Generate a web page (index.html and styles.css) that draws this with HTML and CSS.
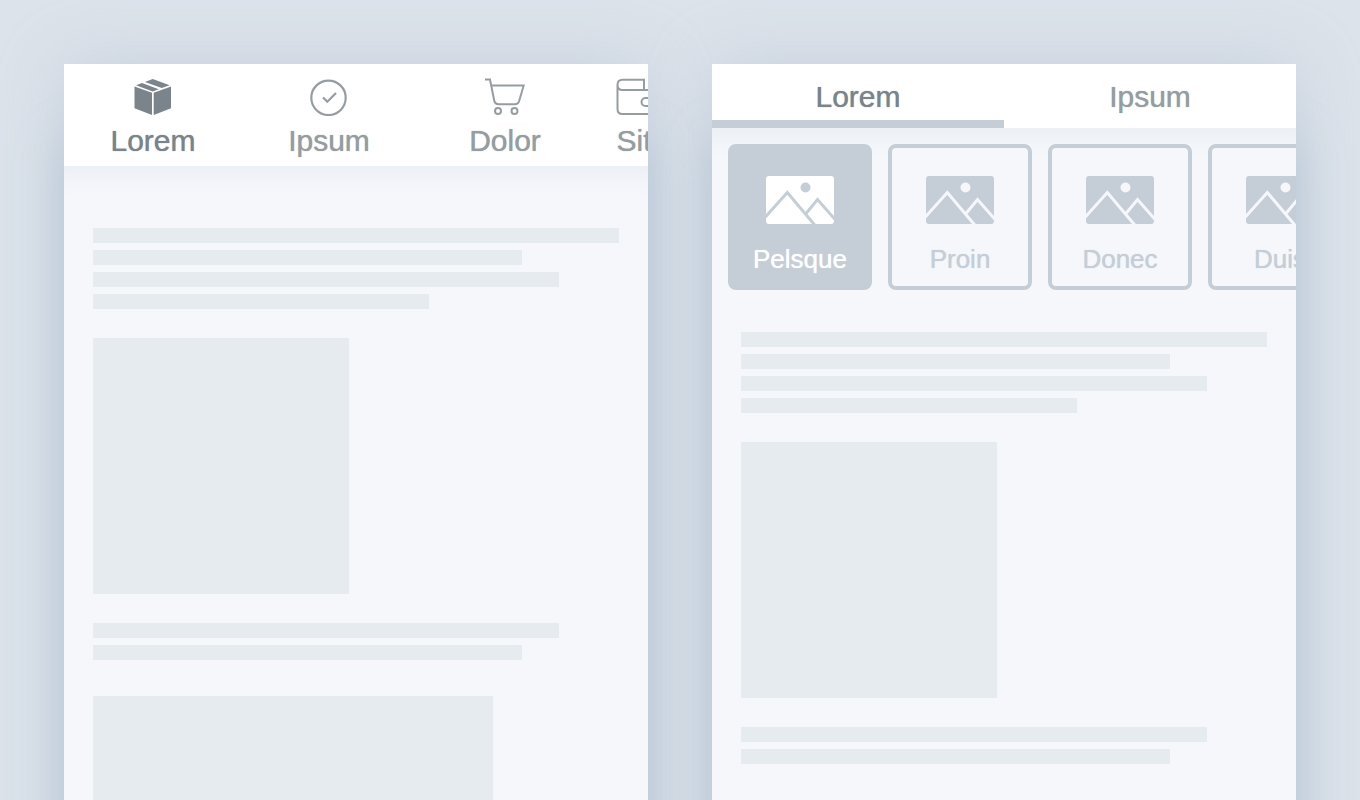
FILE: index.html
```html
<!DOCTYPE html>
<html lang="en">
<head>
<meta charset="utf-8">
<meta name="viewport" content="width=device-width, initial-scale=1.0">
<title>Tabs</title>
<link rel="stylesheet" href="styles.css">
</head>
<body>

<svg class="defs">
<symbol id="picture" viewBox="0 0 68 48">
<rect width="68" height="48" rx="3" fill="currentColor"/>
<circle class="cut-fill" cx="39.500" cy="11.500" r="5"/>
<path class="cut-line" d="M-3 43.500L21.300 16.500L50 50.500M40 37.500L51.500 23.500L70 44.500"/>
</symbol>
</svg>

<main class="screens">

<section class="screen">
<nav class="tabs icon-tabs">
<button class="tab active">
<svg width="38" height="38" viewBox="0 0 38 38" fill="currentColor">
<path d="M.500 8.500L18 14.800V37L.500 30.200Z"/>
<path d="M19.700 14.800L37 8.500V30.200L19.700 37Z"/>
<path d="M2 7.300L8 5L24.700 11.200L18.700 13.400Z"/>
<path d="M11 3.900L18.700 1L35.700 7.300L27.700 10.100Z"/>
</svg>
<span>Lorem</span>
</button>
<button class="tab">
<svg width="38" height="38" viewBox="0 0 38 38" fill="none" stroke="currentColor" stroke-width="2.200">
<circle cx="18.500" cy="19.800" r="17.200"/>
<path d="M13 19.500L17.300 23.800L26 15"/>
</svg>
<span>Ipsum</span>
</button>
<button class="tab">
<svg width="40" height="38" viewBox="0 0 40 38" fill="none" stroke="currentColor" stroke-width="2">
<path d="M0 1.500H5L9.200 22.500Q10 26.300 14 26.300H30Q33 26.300 34 23.500L38.700 7.500H6.300"/>
<circle cx="13" cy="33" r="3"/>
<circle cx="29.500" cy="33" r="3"/>
</svg>
<span>Dolor</span>
</button>
<button class="tab tab-short">
<svg width="38" height="38" viewBox="0 0 38 38" fill="none" stroke="currentColor" stroke-width="2">
<path d="M29 12V1.800H7.500Q2.500 1.800 2.500 6.900V31Q2.500 36 7.500 36H37V12H7.500Q2.500 12 2.500 6.900"/>
<path d="M37 20H30.500a4 4 0 0 0 0 8H37"/>
</svg>
<span>Sit</span>
</button>
</nav>
<div class="content">
<div class="bar w100"></div>
<div class="bar w82"></div>
<div class="bar w89"></div>
<div class="bar w64"></div>
<div class="box w49"></div>
<div class="bar w89"></div>
<div class="bar w82"></div>
<div class="box w76"></div>
</div>
</section>

<section class="screen">
<nav class="tabs text-tabs">
<button class="tab active">Lorem</button>
<button class="tab">Ipsum</button>
</nav>
<div class="cards">
<button class="card selected"><svg class="pic"><use href="#picture"/></svg><span>Pelsque</span></button>
<button class="card"><svg class="pic"><use href="#picture"/></svg><span>Proin</span></button>
<button class="card"><svg class="pic"><use href="#picture"/></svg><span>Donec</span></button>
<button class="card"><svg class="pic"><use href="#picture"/></svg><span>Duis</span></button>
</div>
<div class="content under-cards">
<div class="bar w100"></div>
<div class="bar w82"></div>
<div class="bar w89"></div>
<div class="bar w64"></div>
<div class="box w49"></div>
<div class="bar w89"></div>
<div class="bar w82"></div>
</div>
</section>

</main>
</body>
</html>
```
FILE: styles.css
```css
* {
    box-sizing: border-box;
}

body{
margin:0;
height:100vh;
overflow:hidden;
background:#dce3ea;
font-family:"Liberation Sans", Arial, sans-serif;
}

button{
font-family:inherit;
border:0;
margin:0;
padding:0;
background:none;
cursor:pointer;
text-shadow:0 0 1px currentColor;
}

.defs{
display:none;
}

.screens{
display:grid;
grid-template-columns:1fr 1fr;
gap:64px;
height:100%;
padding:64px 64px 0;
}

.screen{
min-width:0;
position:relative;
background:#f5f7fb;
}

/* the shadow sits behind both screens */
.screen::before{
content:"";
position:absolute;
inset:0 0 -100px;
z-index:-1;
box-shadow:0 0 60px rgba(190,200,216,0.7), 0 80px 40px rgba(160,184,198,0.65);
}

.tabs{
display:flex;
overflow:hidden;
position:relative;
background:white;
}

.icon-tabs{
height:102px;
padding-left:1px;
}

.tabs + .content{
box-shadow:inset 0 32px 24px -24px #e9edf5;
}

.tab{
flex:0 0 176px;
display:flex;
flex-direction:column;
align-items:center;
gap:8px;
padding-top:14px;
font-size:30px;
line-height:34px;
color:#969da1;
}

.tab-short{
flex-basis:82px;
}

.tab.active{
color:#7b838b;
}

.text-tabs{
height:64px;
}

.text-tabs .tab{
flex:1;
padding-top:16px;
border-bottom:8px solid white;
}

.text-tabs .active{
border-bottom-color:#c5cdd7;
}

.cards{
display:flex;
gap:16px;
padding:16px 0 0 16px;
overflow:hidden;
box-shadow:inset 0 32px 24px -24px #e9edf4;
}

.card{
--back:#f5f7fb;
flex:0 0 144px;
height:146px;
display:flex;
flex-direction:column;
align-items:center;
gap:20px;
padding-top:28px;
border:4px solid #c5cdd7;
border-radius:8px;
background:var(--back);
color:#c5cdd7;
font-size:26px;
line-height:30px;
}

.card.selected{
--back:#c5cdd7;
color:white;
}

.pic{
width:68px;
height:48px;
flex:none;
}

.cut-fill{
fill:var(--back);
}

.cut-line{
fill:none;
stroke:var(--back);
stroke-width:3px;
}

.content{
display:flex;
flex-direction:column;
gap:7px;
padding:62px 5% 0;
}

.under-cards{
padding-top:42px;
}

.bar{
height:15px;
background:#e5ebee;
}

.box{
aspect-ratio:1;
margin:22px 0;
background:#e5ebee;
}

.box.w76{
margin-top:29px;
}

.w100{
width:100%;
}

.w89{
width:88.6%;
}

.w82{
width:81.6%;
}

.w76{
width:76%;
}

.w64{
width:63.9%;
}

.w49{
width:48.7%;
}
```
